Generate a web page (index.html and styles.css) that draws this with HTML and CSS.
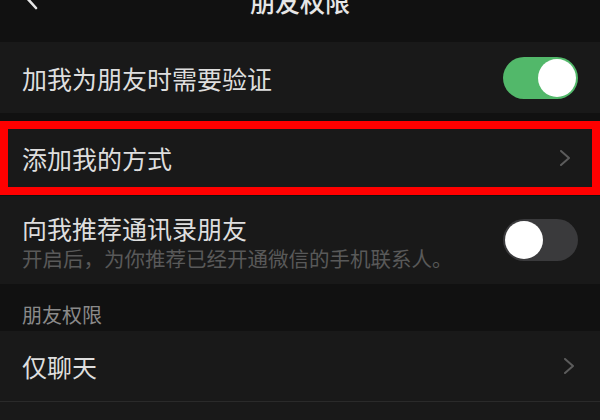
FILE: index.html
```html
<!DOCTYPE html>
<html lang="zh-CN">
<head>
    <meta charset="UTF-8">
    <meta name="viewport" content="width=device-width, initial-scale=1.0">
    <title>朋友权限</title>
    <link rel="stylesheet" href="styles.css">
</head>
<body>
    <header class="top-bar">
        <svg class="back" width="20" height="28" viewBox="0 0 20 28">
            <polyline points="14,2 4,13 14,24" fill="none" stroke="#e6e6e6" stroke-width="2.6" stroke-linecap="round" stroke-linejoin="round"/>
        </svg>
        <h1 class="title">朋友权限</h1>
    </header>

    <div class="row">
        <span class="label">加我为朋友时需要验证</span>
        <span class="switch on"><span class="knob"></span></span>
    </div>

    <div class="gap"></div>

    <div class="row marked">
        <span class="label">添加我的方式</span>
        <svg class="arrow" width="12" height="16" viewBox="0 0 12 16">
            <polyline points="2,1 10,8 2,15" fill="none" stroke="#5c5c5c" stroke-width="2" stroke-linecap="round" stroke-linejoin="round"/>
        </svg>
    </div>

    <div class="row tall">
        <div class="text">
            <span class="label">向我推荐通讯录朋友</span>
            <span class="hint">开启后，为你推荐已经开通微信的手机联系人。</span>
        </div>
        <span class="switch"><span class="knob"></span></span>
    </div>

    <div class="section">朋友权限</div>

    <div class="row line">
        <span class="label">仅聊天</span>
        <svg class="arrow" width="12" height="16" viewBox="0 0 12 16">
            <polyline points="2,1 10,8 2,15" fill="none" stroke="#5c5c5c" stroke-width="2" stroke-linecap="round" stroke-linejoin="round"/>
        </svg>
    </div>

    <div class="row"></div>
</body>
</html>
```

FILE: styles.css
```css
body {
    margin: 0;
    padding: 0;
    width: 600px;
    height: 420px;
    overflow: hidden;
    background-color: #111111;
    font-family: "Noto Sans CJK SC", "Noto Sans", sans-serif;
    color: #dedede;
}
.top-bar {
    position: relative;
    height: 42px;
    display: flex;
    justify-content: center;
    align-items: flex-start;
    background-color: #111111;
    overflow: hidden;
}
.back {
    position: absolute;
    left: 22px;
    top: -16px;
}
.title {
    margin: -14px 0 0 0;
    font-size: 25px;
    font-weight: 500;
    line-height: 30px;
    color: #e6e6e6;
}
.row {
    display: flex;
    align-items: center;
    justify-content: space-between;
    height: 71px;
    padding: 0 22px;
    background-color: #191919;
}
.label {
    font-size: 25px;
    line-height: 32px;
}
.gap {
    height: 8px;
}
.marked {
    height: 58px;
    padding: 0 18px 0 14px;
    border: 8px solid #ff0000;
    margin-bottom: 1px;
}
.arrow {
    margin-right: 3px;
}
.tall {
    height: 88px;
}
.text {
    display: flex;
    flex-direction: column;
    padding-top: 4px;
}
.hint {
    font-size: 20.5px;
    line-height: 28px;
    color: #595959;
}
.switch {
    position: relative;
    width: 75px;
    height: 42px;
    border-radius: 21px;
    background-color: #3a3a3c;
    flex-shrink: 0;
}
.switch .knob {
    position: absolute;
    top: 2px;
    left: 2px;
    width: 38px;
    height: 38px;
    border-radius: 50%;
    background-color: #ffffff;
}
.switch.on {
    background-color: #52b86a;
}
.switch.on .knob {
    left: auto;
    right: 2px;
}
.section {
    height: 47px;
    padding: 0 22px;
    font-size: 20px;
    line-height: 62px;
    color: #8a8a8a;
    overflow: hidden;
}
.line {
    height: 70px;
    border-bottom: 1px solid #2a2a2a;
    background-image: none;
}
```
